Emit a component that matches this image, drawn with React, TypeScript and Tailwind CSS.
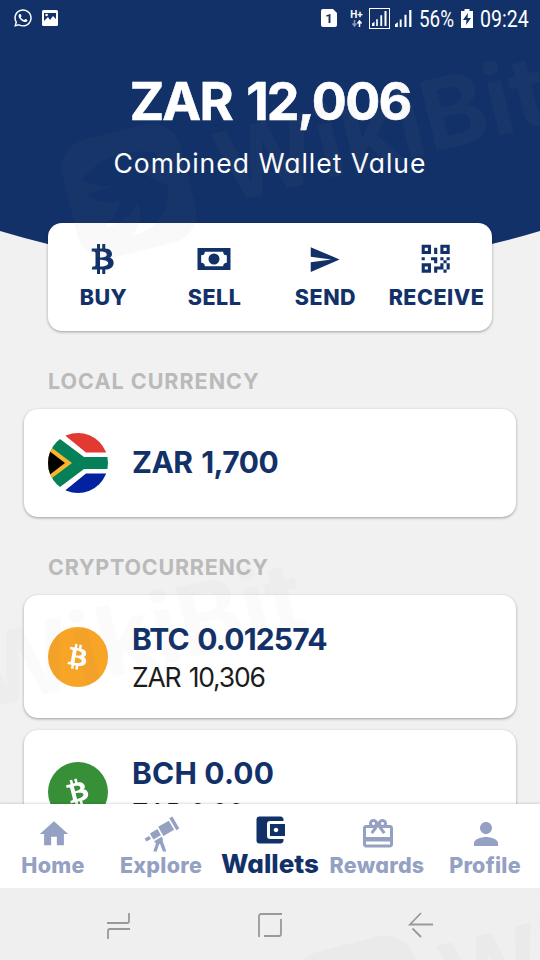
import React from "react";
import { MdCardGiftcard, MdPerson, MdAccountBalanceWallet } from "react-icons/md";
import { FaWhatsapp } from "react-icons/fa";

const BTC =
  "M4.5,5H8V2H10V5H11.5V2H13.5V5C19,5 19,11 16,11.25C20,11 21,19 13.5,19V22H11.5V19H10V22H8V19H4.5L5,17H6A1,1 0 0,0 7,16V8A1,1 0 0,0 6,7H4.5V5M10,7V11C10,11 14.5,11.25 14.5,9C14.5,6.75 10,7 10,7M10,12.5V17C10,17 15.5,17 15.5,14.75C15.5,12.5 10,12.5 10,12.5Z";
const CASH =
  "M3,6H21V18H3V6M12,9A3,3 0 0,1 15,12A3,3 0 0,1 12,15A3,3 0 0,1 9,12A3,3 0 0,1 12,9M7,8A2,2 0 0,1 5,10V14A2,2 0 0,1 7,16H17A2,2 0 0,1 19,14V10A2,2 0 0,1 17,8H7Z";
const SEND = "M2,21L23,12L2,3V10L17,12L2,14V21Z";
const QR =
  "M3,11H5V13H3V11M11,5H13V9H11V5M9,11H13V15H11V13H9V11M15,11H17V13H19V11H21V13H19V15H21V19H19V21H17V19H13V21H11V17H15V15H17V13H15V11M19,19V15H17V19H19M15,3H21V9H15V3M17,5V7H19V5H17M3,3H9V9H3V3M5,5V7H7V5H5M3,15H9V21H3V15M5,17V19H7V17H5Z";
const HOME = "M10,20V14H14V20H19V12H22L12,3L2,12H5V20H10Z";
const TELESCOPE =
  "M21.9,8.9L20.2,9.9L16.2,3L17.9,2L21.9,8.9M9.8,7.9L12.8,13.1L18.9,9.6L15.9,4.4L9.8,7.9M11.4,12.7L9.4,9.2L5.1,11.7L7.1,15.2L11.4,12.7M2.1,14.6L3.1,16.3L5.7,14.8L4.7,13.1L2.1,14.6M12.1,14L11.8,13.6L7.5,16.1L7.8,16.5C8,16.8 8.3,17.1 8.6,17.3L7,22H9L10.4,17.7H10.9L12.5,22H14.5L12.4,16C12.6,15.3 12.5,14.6 12.1,14Z";

function Glyph({ d, className }: { d: string; className: string }) {
  return (
    <svg viewBox="0 0 24 24" fill="currentColor" className={`shrink-0 ${className}`}>
      <path d={d} fillRule="evenodd" />
    </svg>
  );
}

function Bars({ className }: { className: string }) {
  return (
    <svg viewBox="0 0 18 18" className={className} fill="currentColor">
      <path d="M0 18v-3l3-2v5zM5 18v-8h2v8zM10 18V5h2.2v13zM15 18V0h2.4v18z" />
    </svg>
  );
}

function StatusBar() {
  return (
    <div className="flex h-9 items-center justify-between pr-3 pl-[13px] text-white">
      <div className="flex items-center gap-[9px]">
        <FaWhatsapp className="size-5" />
        <svg viewBox="0 0 16 16" className="size-4">
          <rect width="16" height="16" rx="1.5" fill="#fff" />
          <path d="M2 3h12v6l-3-3-3 4-2-3-4 4z" fill="#123168" />
          <circle cx="4.6" cy="5" r="1.3" fill="#fff" />
        </svg>
      </div>
      <div className="flex items-center font-[Roboto,sans-serif]">
        <svg viewBox="0 0 16 18" className="mr-3 h-[18px] w-4">
          <path d="M2 0h10l4 4v12a2 2 0 0 1-2 2H2a2 2 0 0 1-2-2V2a2 2 0 0 1 2-2z" fill="#fff" />
          <text x="8" y="13.5" textAnchor="middle" fontSize="13" fontWeight="700" fill="#123168">1</text>
        </svg>
        <div className="mr-[5px] flex w-[15px] flex-col items-center text-[10px] leading-[9px] font-bold">
          <span>H+</span>
          <svg viewBox="0 0 12 7" className="mt-px h-[7px] w-3" fill="none" stroke="#fff" strokeWidth="1.5">
            <path d="M3.5 0v5M1.5 3.5l2 2.5 2-2.500" opacity=".5" />
            <path d="M8.5 7V2M6.5 3.5l2-2.5 2 2.5" />
          </svg>
        </div>
        <div className="mr-[5px] flex h-[21px] w-[21px] items-center justify-center border-[1.5px] border-white">
          <Bars className="size-[15px]" />
        </div>
        <Bars className="mr-[7px] size-[17px]" />
        <span className="mt-[2px] w-[36px] origin-left scale-x-[.82] text-[23px] leading-none whitespace-nowrap">56%</span>
        <svg viewBox="0 0 12 19" className="mr-[7px] ml-[6px] h-[19px] w-3">
          <path d="M3.5 0h5v2H12v17H0V2h3.5z" fill="#fff" />
          <path d="M7 4L2 11h3.5L5 16l5-7H6.500z" fill="#123168" />
        </svg>
        <span className="mt-[2px] w-[48px] origin-left scale-x-[.85] text-[23px] leading-none whitespace-nowrap">09:24</span>
      </div>
    </div>
  );
}

function Action({ d, icon, label }: { d: string; icon: string; label: string }) {
  return (
    <div className="flex w-[111px] flex-col items-center">
      <div className="mr-[2px] flex h-9 items-center justify-center">
        <Glyph d={d} className={icon} />
      </div>
      <span className="mt-[6px] text-[21.500px] leading-[28px] font-extrabold tracking-[0.5px]">{label}</span>
    </div>
  );
}

function Flag() {
  return (
    <svg viewBox="0 0 60 60" className="size-[60px] shrink-0">
      <clipPath id="disc">
        <circle cx="30" cy="30" r="30" />
      </clipPath>
      <g clipPath="url(#disc)">
        <rect width="60" height="60" fill="#fff" />
        <path d="M14 0L38 19.500H60V0z" fill="#e23a33" />
        <path d="M14 60L38 40.500H60V60z" fill="#0322a0" />
        <path d="M-4 0H4L36 24H60V36H36L4 60H-4z" fill="#058058" />
        <path d="M0 12L24 30L0 48z" fill="#fbb52d" />
        <path d="M0 17L17 30L0 43z" fill="#000" />
      </g>
    </svg>
  );
}

function Coin({ className, glyph }: { className: string; glyph: string }) {
  return (
    <div className={`flex size-[60px] shrink-0 items-center justify-center rounded-full text-white ${className}`}>
      <Glyph d={BTC} className={glyph} />
    </div>
  );
}

function WatermarkText({ className }: { className: string }) {
  return (
    <span className={`pointer-events-none absolute text-[98px] leading-none font-bold ${className}`}>
      WikiBit
    </span>
  );
}

function WatermarkMark({ className }: { className: string }) {
  return (
    <svg viewBox="0 0 120 120" className={`pointer-events-none absolute ${className}`} fill="currentColor">
      <path
        fillRule="evenodd"
        d="M30 0H90A30 30 0 0 1 120 30V90A30 30 0 0 1 90 120H30A30 30 0 0 1 0 90V30A30 30 0 0 1 30 0ZM18 38C35 22 70 18 94 30L99 45C90 38 78 38 70 41L98 64C94 91 76 105 52 103C62 96 69 84 64 74C56 84 39 92 29 88C40 82 48 74 49 67C36 68 24 62 19 53L48 52C36 50 24 45 18 38Z"
      />
    </svg>
  );
}

function Tab({ icon, label }: { icon: React.ReactNode; label: string }) {
  return (
    <div className="flex w-[108px] flex-col items-center text-[#94a1c2]">
      <div className="flex h-9 items-center justify-center">{icon}</div>
      <span className="mr-[2px] text-[21.500px] leading-[27px] font-extrabold tracking-[0.25px]">{label}</span>
    </div>
  );
}

export default function App() {
  return (
    <div className="relative flex h-[960px] w-[540px] flex-col overflow-hidden bg-[#f1f1f1] font-[Inter,sans-serif] text-[#123168] [font-feature-settings:'cv11'_1]">
      <div className="h-[804px] shrink-0 overflow-hidden">
        <header className="relative z-0 h-[223px] text-white">
          <svg viewBox="0 0 540 280" className="absolute top-0 left-0 -z-10 h-[280px] w-[540px]">
            <path d="M0 0H540V231Q270 312 0 231Z" fill="#123168" />
          </svg>
          <StatusBar />
          <h1 className="mt-[34px] text-center text-[52px] leading-[64px] font-bold tracking-[-1.800px] [word-spacing:4px] whitespace-nowrap [-webkit-text-stroke:0.6px_#fff]">ZAR 12,006</h1>
          <p className="mt-3 text-center text-[26.500px] leading-[34px] tracking-[1px]">Combined Wallet Value</p>
        </header>
        <section className="relative mx-12 flex h-[108px] rounded-[14px] bg-white pt-[18px] shadow-[0_1px_3px_rgba(0,0,0,.35)]">
          <Action d={BTC} icon="size-9" label="BUY" />
          <Action d={CASH} icon="size-[44px]" label="SELL" />
          <Action d={SEND} icon="size-[33px]" label="SEND" />
          <Action d={QR} icon="size-[37.400px]" label="RECEIVE" />
        </section>
        <h2 className="mt-[36px] ml-12 text-[21.500px] leading-[28px] font-bold tracking-[1px] text-[#bababa]">LOCAL CURRENCY</h2>
        <section className="mx-6 mt-[14px] flex h-[108px] items-center rounded-[14px] bg-white pl-6 shadow-[0_1px_3px_rgba(0,0,0,.35)]">
          <Flag />
          <span className="-mt-[2px] ml-6 text-[30px] leading-[38px] font-bold tracking-[-0.5px] [word-spacing:2px]">ZAR 1,700</span>
        </section>
        <h2 className="mt-[36px] ml-12 text-[21.500px] leading-[28px] font-bold tracking-[0.75px] text-[#bababa]">CRYPTOCURRENCY</h2>
        <section className="mx-6 mt-[14px] flex h-[123px] items-center rounded-[14px] bg-white pl-6 shadow-[0_1px_3px_rgba(0,0,0,.35)]">
          <Coin className="bg-[#f7a427]" glyph="size-[30px] rotate-[10deg]" />
          <div className="mt-[2px] ml-6 flex flex-col">
            <span className="text-[30px] leading-[38px] font-bold tracking-[-0.8px] [word-spacing:2px]">BTC 0.012574</span>
            <span className="text-[26.500px] leading-[38px] tracking-[-1.200px] text-[#1c1c1c] [word-spacing:2px]">ZAR 10,306</span>
          </div>
        </section>
        <section className="mx-6 mt-3 flex h-[123px] items-center rounded-[14px] bg-white pl-6 shadow-[0_1px_3px_rgba(0,0,0,.35)]">
          <Coin className="bg-[#378f38]" glyph="size-[32px] -rotate-[14deg]" />
          <div className="mt-[5px] ml-6 flex flex-col">
            <span className="text-[30px] leading-[38px] font-bold tracking-[0.2px]">BCH 0.00</span>
            <span className="text-[26.500px] leading-[42px] tracking-[-0.5px] text-[#1c1c1c]">ZAR 0.00</span>
          </div>
        </section>
      </div>
      <nav className="relative flex h-[84px] shrink-0 bg-white pt-3 shadow-[0_-1px_2px_rgba(0,0,0,.13)]">
        <Tab icon={<Glyph d={HOME} className="size-[34px]" />} label="Home" />
        <Tab icon={<Glyph d={TELESCOPE} className="size-[42px]" />} label="Explore" />
        <div className="flex w-[108px] flex-col items-center">
          <div className="-mt-[4px] flex h-9 items-center">
            <MdAccountBalanceWallet className="size-[36px]" />
          </div>
          <span className="mt-px text-[26px] leading-[30px] font-extrabold">Wallets</span>
        </div>
        <Tab icon={<MdCardGiftcard className="size-[36px]" />} label="Rewards" />
        <Tab icon={<MdPerson className="size-[36px]" />} label="Profile" />
      </nav>
      <div className="flex h-[72px] shrink-0 items-center bg-[#efefef] pl-[105px] text-[#999]">
        <svg viewBox="0 0 28 30" className="h-[30px] w-7" fill="none" stroke="currentColor" strokeWidth="1.800">
          <path d="M2 14H22a2 2 0 0 0 2-2V4M3 30V22a2 2 0 0 1 2-2H25" />
        </svg>
        <svg viewBox="0 0 28 28" className="mt-[2px] ml-[123px] size-7" fill="none" stroke="currentColor" strokeWidth="1.800">
          <path d="M3 26V5a2 2 0 0 1 2-2H26M25 8V23a2 2 0 0 1-2 2H8" />
        </svg>
        <svg viewBox="0 0 28 28" className="mt-[2px] ml-[123px] size-7" fill="none" stroke="currentColor" strokeWidth="1.800">
          <path d="M14 2L3 13.500H26M5.500 17.500L14 26" />
        </svg>
      </div>
      <WatermarkMark className="top-[130px] left-[68px] size-[122px] -rotate-[14deg] text-[#909090]/5" />
      <WatermarkText className="top-[80px] left-[212px] -rotate-[14deg] text-[#909090]/6" />
      <WatermarkText className="top-[586px] -left-[32px] -rotate-[14deg] text-[#808080]/3" />
      <WatermarkMark className="top-[942px] left-[302px] size-[122px] -rotate-[14deg] text-[#808080]/4" />
      <WatermarkText className="top-[892px] left-[438px] -rotate-[14deg] text-[#808080]/4" />
    </div>
  );
}
